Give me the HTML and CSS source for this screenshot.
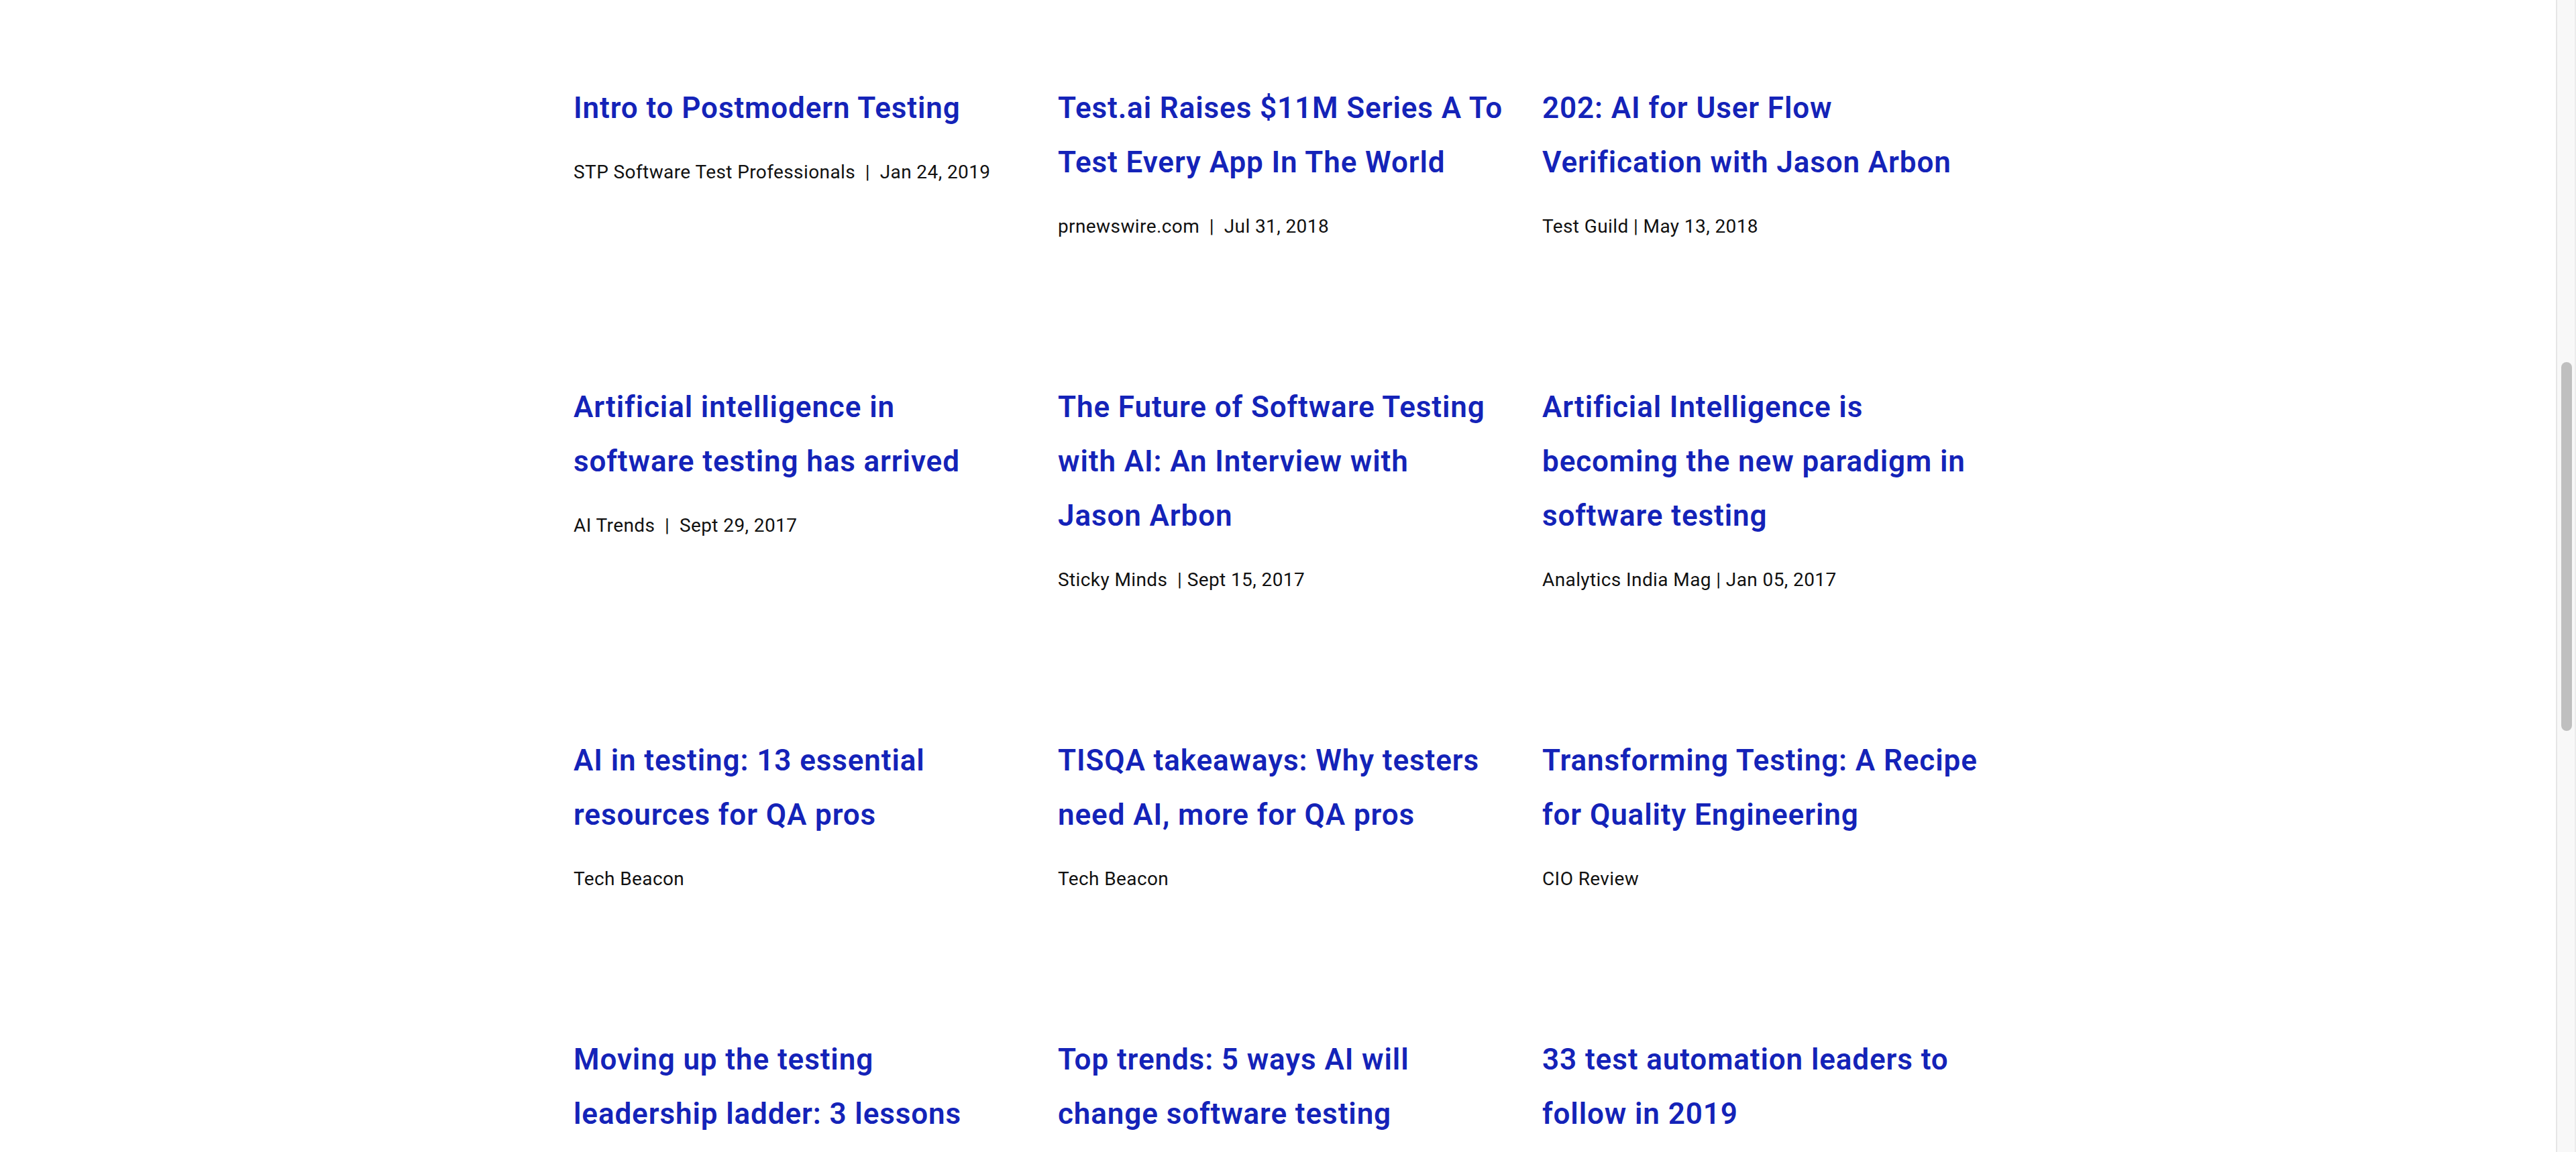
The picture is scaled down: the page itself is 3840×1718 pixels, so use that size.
FILE: index.html
```html
<!DOCTYPE html>
<html lang="en">
<head>
<meta charset="utf-8">
<title>Press</title>
<link rel="stylesheet" href="styles.css">
</head>
<body>
<main class="press">
  <article class="item">
    <a class="item-title" href="#">Intro to Postmodern Testing</a>
    <p class="item-meta">STP Software Test Professionals &nbsp;|&nbsp; Jan 24, 2019</p>
  </article>
  <article class="item">
    <a class="item-title" href="#">Test.ai Raises $11M Series A To Test Every App In The World</a>
    <p class="item-meta">prnewswire.com &nbsp;|&nbsp; Jul 31, 2018</p>
  </article>
  <article class="item">
    <a class="item-title" href="#">202: AI for User Flow Verification with Jason Arbon</a>
    <p class="item-meta">Test Guild | May 13, 2018</p>
  </article>

  <article class="item">
    <a class="item-title" href="#">Artificial intelligence in software testing has arrived</a>
    <p class="item-meta">AI Trends &nbsp;|&nbsp; Sept 29, 2017</p>
  </article>
  <article class="item">
    <a class="item-title" href="#">The Future of Software Testing with AI: An Interview with <span class="keep">Jason Arbon</span></a>
    <p class="item-meta">Sticky Minds &nbsp;| Sept 15, 2017</p>
  </article>
  <article class="item">
    <a class="item-title" href="#">Artificial Intelligence is becoming the new paradigm in software testing</a>
    <p class="item-meta">Analytics India Mag | Jan 05, 2017</p>
  </article>

  <article class="item">
    <a class="item-title" href="#">AI in testing: 13 essential resources for QA pros</a>
    <p class="item-meta">Tech Beacon</p>
  </article>
  <article class="item">
    <a class="item-title" href="#">TISQA takeaways: Why testers need AI, more for QA pros</a>
    <p class="item-meta">Tech Beacon</p>
  </article>
  <article class="item">
    <a class="item-title" href="#">Transforming Testing: A Recipe for Quality Engineering</a>
    <p class="item-meta">CIO Review</p>
  </article>

  <article class="item">
    <a class="item-title" href="#">Moving up the testing leadership ladder: 3 lessons</a>
    <p class="item-meta">Tech Beacon</p>
  </article>
  <article class="item">
    <a class="item-title" href="#">Top trends: 5 ways AI will change software testing</a>
    <p class="item-meta">Tech Beacon</p>
  </article>
  <article class="item">
    <a class="item-title" href="#">33 test automation leaders to follow in 2019</a>
    <p class="item-meta">Tech Beacon</p>
  </article>
</main>
<div class="scrollbar" aria-hidden="true"><div class="scrollbar-thumb"></div></div>
</body>
</html>
```

FILE: styles.css
```css
html, body {
  margin: 0;
  padding: 0;
  height: 100%;
  overflow: hidden;
  background: #ffffff;
}

body {
  font-family: Roboto, "Liberation Sans", sans-serif;
}

.press {
  width: 2130px;
  margin: 0 auto;
  padding-top: 121px;
  display: grid;
  grid-template-columns: repeat(3, 668px);
  column-gap: 54px;
  row-gap: 208px;
  align-items: start;
}

.item {
  display: flex;
  flex-direction: column;
}

.item-title {
  color: #1423b8;
  text-decoration: none;
  font-family: Roboto, "Liberation Sans", sans-serif;
  font-weight: 600;
  font-size: 44px;
  line-height: 81px;
  letter-spacing: 0.9px;
}

.keep {
  white-space: nowrap;
}

.item-meta {
  margin: 34px 0 0;
  color: #111111;
  font-size: 28px;
  line-height: 42px;
  letter-spacing: 0.4px;
}

.scrollbar {
  position: fixed;
  top: 0;
  right: 0;
  width: 26px;
  height: 100%;
  background: #f8f8f8;
  border-left: 2px solid #e6e6e6;
  border-right: 2px solid #ececec;
}

.scrollbar-thumb {
  position: absolute;
  left: 6px;
  top: 540px;
  width: 16px;
  height: 550px;
  background: #bfbfbf;
  border-radius: 8px;
}
```
